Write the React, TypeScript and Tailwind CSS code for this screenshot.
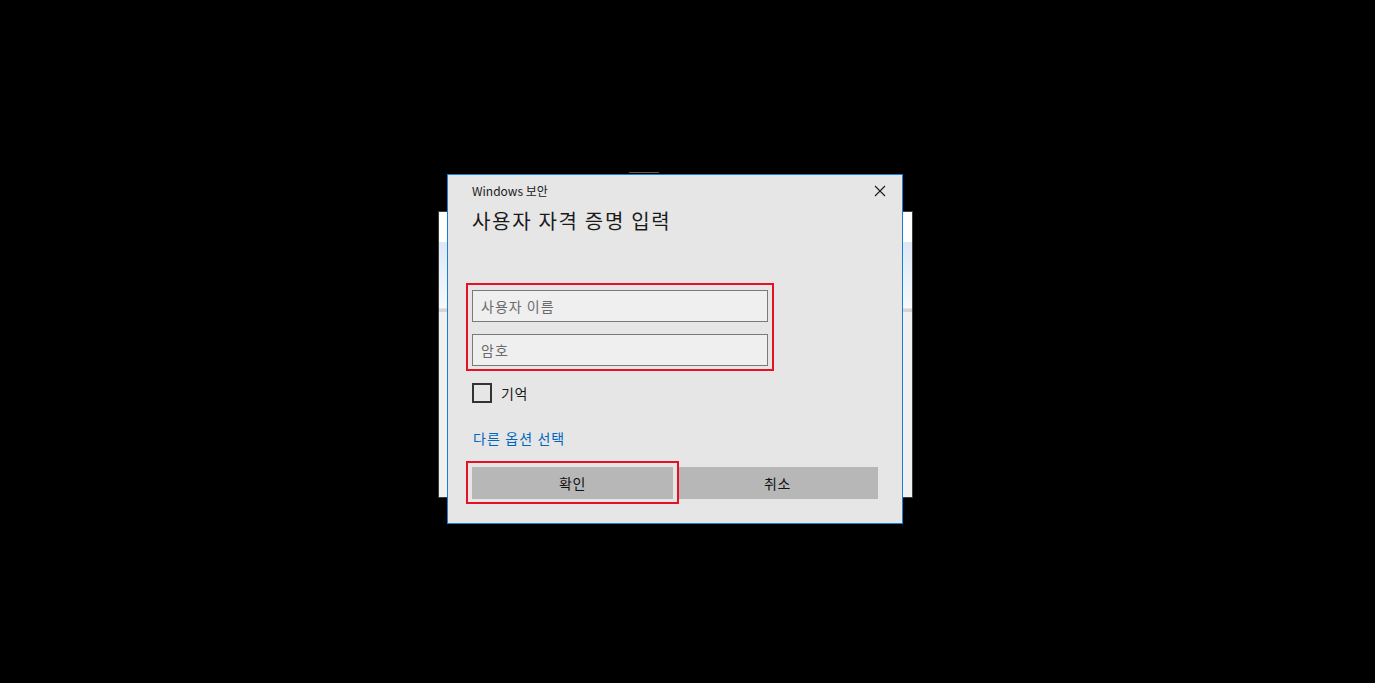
const font = "font-['Noto_Sans_CJK_KR','Noto_Sans',sans-serif]";

const BackWindow = () => (
  <div className="absolute left-[438px] top-[211px] w-[475px] h-[287px] border border-[#3c3c3c] flex flex-col bg-[#f0f0f0]">
    <div className="h-[30px] bg-white" />
    <div className="h-[66px] bg-gradient-to-b from-[#dde8f5] to-[#f6f9fc]" />
    <div className="h-[1px] bg-[#e4e4e4]" />
    <div className="h-[3px] bg-[#d4d4d4]" />
    <div className="flex-1 bg-[#f0f0f0]" />
  </div>
);

const CloseIcon = () => (
  <svg width="12" height="12" viewBox="0 0 12 12" className="block">
    <path d="M1 1 L11 11 M11 1 L1 11" stroke="#1a1a1a" strokeWidth="1.1" fill="none" />
  </svg>
);

const Field = ({ placeholder }: { placeholder: string }) => (
  <div className="h-[32px] w-[296px] border border-[#7a7a7a] bg-[#efefef] flex items-center pl-[8px]">
    <span className="text-[14px] leading-[20px] tracking-[1px] text-[#6b6b6b]">{placeholder}</span>
  </div>
);

export default function App() {
  return (
    <div className={`relative w-[1375px] h-[683px] bg-black overflow-hidden ${font}`}>
      <div className="absolute left-[629px] top-[172px] w-[30px] h-[1px] bg-[#5a5a5a]" />
      <BackWindow />

      <div className="absolute left-[447px] top-[174px] w-[456px] h-[350px] border border-[#1a7fd4] bg-[#e6e6e6] pl-[24px] pr-[24px]">
        <div className="absolute right-[16px] top-[10px]">
          <CloseIcon />
        </div>

        <div className="mt-[8px] text-[12px] leading-[16px] text-[#1a1a1a]">Windows 보안</div>
        <div className="mt-[8px] text-[20px] leading-[28px] tracking-[1.7px] text-[#1a1a1a]">사용자 자격 증명 입력</div>

        <div className="mt-[48px] ml-[-6px] w-[308px] border-2 border-[#e81123] pt-[5px] pb-[3px] pl-[4px] flex flex-col gap-[12px]">
          <Field placeholder="사용자 이름" />
          <Field placeholder="암호" />
        </div>

        <label className="mt-[12px] flex items-center gap-[9px]">
          <span className="w-[20px] h-[20px] border-2 border-[#333333]" />
          <span className="text-[14px] leading-[20px] tracking-[0.5px] text-[#1a1a1a]">기억</span>
        </label>

        <div className="mt-[25px] ml-[1px] text-[14px] leading-[20px] tracking-[1.1px] text-[#0067c0]">다른 옵션 선택</div>

        <div className="mt-[19px] flex gap-[4px]">
          <div className="relative w-[201px] h-[32px] bg-[#b7b7b7] flex items-center justify-center text-[14px] tracking-[0.5px] text-[#111]">
            확인
            <div className="absolute left-[-6px] top-[-6px] right-[-6px] bottom-[-5px] border-2 border-[#e81123]" />
          </div>
          <div className="w-[201px] h-[32px] bg-[#b7b7b7] flex items-center justify-center text-[14px] tracking-[0.5px] text-[#111]">
            취소
          </div>
        </div>
      </div>
    </div>
  );
}
